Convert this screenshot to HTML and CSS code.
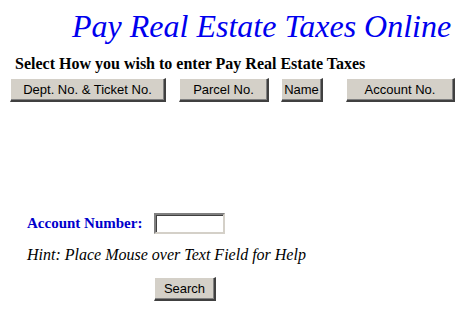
FILE: index.html
```html
<!DOCTYPE html>
<html>
<head>
<meta charset="utf-8">
<title>Pay Real Estate Taxes Online</title>
<link rel="stylesheet" href="styles.css">
</head>
<body>
<div class="page">
  <h1 class="title">Pay Real Estate Taxes Online</h1>
  <div class="subtitle">Select How you wish to enter Pay Real Estate Taxes</div>
  <div class="tabs">
    <button class="btn btn-dept">Dept. No. &amp; Ticket No.</button>
    <button class="btn btn-parcel">Parcel No.</button>
    <button class="btn btn-name">Name</button>
    <button class="btn btn-account">Account No.</button>
  </div>
  <form class="search">
    <div class="field-row">
      <label class="field-label" for="acct">Account Number:</label>
      <input class="field-input" id="acct" type="text">
    </div>
    <div class="hint">Hint: Place Mouse over Text Field for Help</div>
    <div class="submit-row">
      <button class="btn btn-search" type="button">Search</button>
    </div>
  </form>
</div>
</body>
</html>
```
FILE: styles.css
```css
html, body {
  margin: 0;
  padding: 0;
  background: #ffffff;
}
.page {
  font-family: "Liberation Serif", "Times New Roman", serif;
  color: #000;
}
.title {
  margin: 0;
  padding: 8px 0 0 72px;
  font-family: "Liberation Serif", "Times New Roman", serif;
  font-style: italic;
  font-weight: normal;
  font-size: 32px;
  line-height: 37px;
  color: #0000ee;
}
.subtitle {
  margin: 10px 0 0 15px;
  font-family: "Liberation Serif", "Times New Roman", serif;
  font-weight: bold;
  font-size: 16px;
  line-height: 18px;
}
.tabs {
  display: flex;
  margin: 5px 0 0 10px;
}
.btn {
  box-sizing: border-box;
  height: 24px;
  margin: 0;
  padding: 0;
  font-family: "Liberation Sans", Arial, sans-serif;
  font-size: 13px;
  color: #000;
  background: #d4d0c8;
  border-style: solid;
  border-color: #ffffff #404040 #404040 #ffffff;
  border-width: 1px 2px 2px 1px;
  box-shadow: inset -1px -1px 0 #808080;
}
.btn-dept { width: 156px; }
.btn-parcel { width: 90px; margin-left: 13px; }
.btn-name { width: 42px; margin-left: 12px; }
.btn-account { width: 109px; margin-left: 23px; }
.search {
  margin: 111px 0 0 27px;
}
.field-row {
  display: flex;
  align-items: center;
}
.field-label {
  font-family: "Liberation Serif", "Times New Roman", serif;
  font-weight: bold;
  font-size: 15px;
  color: #0000cc;
  width: 127px;
}
.field-input {
  box-sizing: border-box;
  width: 71px;
  height: 21px;
  margin: 0;
  border-style: solid;
  border-width: 2px;
  border-color: #808080 #d4d0c8 #d4d0c8 #808080;
  box-shadow: inset 1px 1px 0 #404040;
  background: #fff;
}
.hint {
  margin-top: 12px;
  font-family: "Liberation Serif", "Times New Roman", serif;
  font-style: italic;
  font-size: 16px;
  line-height: 18px;
}
.submit-row {
  margin: 13px 0 0 127px;
}
.btn-search {
  width: 62px;
}
```
